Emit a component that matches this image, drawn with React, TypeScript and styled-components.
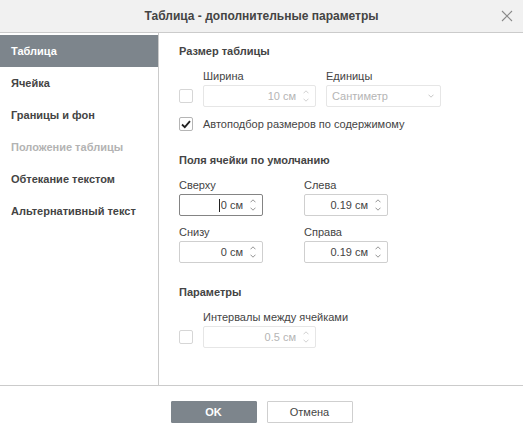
import React from 'react';
import styled, { createGlobalStyle } from 'styled-components';

const GlobalStyle = createGlobalStyle`
  html, body {
    margin: 0;
    padding: 0;
    background: #ffffff;
  }
  body {
    font-family: "Liberation Sans", Arial, sans-serif;
    font-size: 11px;
    color: #444444;
  }
`;

const navItems = [
  { label: 'Таблица', active: true },
  { label: 'Ячейка' },
  { label: 'Границы и фон' },
  { label: 'Положение таблицы', disabled: true },
  { label: 'Обтекание текстом' },
  { label: 'Альтернативный текст' },
];

const Chevron = ({ up }: { up?: boolean }) => (
  <svg width="6" height="4" viewBox="0 0 6 4">
    <path
      d={up ? 'M0.5 3.3 L3 0.8 L5.5 3.3' : 'M0.5 0.7 L3 3.2 L5.5 0.7'}
      fill="none"
      stroke="currentColor"
      strokeWidth="0.9"
    />
  </svg>
);

const Spinner = ({ disabled }: { disabled?: boolean }) => (
  <SpinBox $disabled={disabled}>
    <Chevron up />
    <Chevron />
  </SpinBox>
);

interface SpinInputProps {
  value: string;
  width: number;
  disabled?: boolean;
  focused?: boolean;
}

const SpinInput = ({ value, width, disabled, focused }: SpinInputProps) => (
  <InputBox $width={width} $disabled={disabled} $focused={focused}>
    {focused && <Caret />}
    {value}
    <Spinner disabled={disabled} />
  </InputBox>
);

const Checkbox = ({ checked, disabled }: { checked?: boolean; disabled?: boolean }) => (
  <CheckBox $disabled={disabled}>
    {checked && (
      <svg width="10" height="9" viewBox="0 0 10 9">
        <path d="M1 4.5 L3.8 7.2 L9 1.2" fill="none" stroke="#222" strokeWidth="1.8" />
      </svg>
    )}
  </CheckBox>
);

const App = () => (
  <>
    <GlobalStyle />
    <Dialog>
      <Header>
        <Title>Таблица - дополнительные параметры</Title>
        <CloseButton>
          <svg width="12" height="12" viewBox="0 0 12 12">
            <path d="M1 1 L11 11 M11 1 L1 11" stroke="#8a8a8a" strokeWidth="1.1" />
          </svg>
        </CloseButton>
      </Header>
      <Body>
        <Nav>
          {navItems.map((item) => (
            <NavItem key={item.label} $active={item.active} $disabled={item.disabled}>
              {item.label}
            </NavItem>
          ))}
        </Nav>
        <Content>
          <Section>
            <Heading>Размер таблицы</Heading>
            <CheckRow>
              <Checkbox disabled />
              <Field>
                <Label>Ширина</Label>
                <SpinInput value="10 см" width={113} disabled />
              </Field>
              <Field>
                <Label>Единицы</Label>
                <Select>
                  Сантиметр
                  <SelectArrow>
                    <Chevron />
                  </SelectArrow>
                </Select>
              </Field>
            </CheckRow>
            <InlineCheck>
              <Checkbox checked />
              <span>Автоподбор размеров по содержимому</span>
            </InlineCheck>
          </Section>

          <Section>
            <Heading>Поля ячейки по умолчанию</Heading>
            <MarginGrid>
              <Field>
                <Label>Сверху</Label>
                <SpinInput value="0 см" width={84} focused />
              </Field>
              <Field>
                <Label>Слева</Label>
                <SpinInput value="0.19 см" width={84} />
              </Field>
              <Field>
                <Label>Снизу</Label>
                <SpinInput value="0 см" width={84} />
              </Field>
              <Field>
                <Label>Справа</Label>
                <SpinInput value="0.19 см" width={84} />
              </Field>
            </MarginGrid>
          </Section>

          <Section>
            <Heading>Параметры</Heading>
            <CheckRow>
              <Checkbox disabled />
              <Field>
                <Label>Интервалы между ячейками</Label>
                <SpinInput value="0.5 см" width={113} disabled />
              </Field>
            </CheckRow>
          </Section>
        </Content>
      </Body>
      <Footer>
        <Button $primary>OK</Button>
        <Button>Отмена</Button>
      </Footer>
    </Dialog>
  </>
);

const Dialog = styled.div`
  width: 523px;
  height: 430px;
  display: flex;
  flex-direction: column;
  background: #ffffff;
  overflow: hidden;
`;

const Header = styled.div`
  position: relative;
  height: 32px;
  flex-shrink: 0;
  display: flex;
  align-items: center;
  justify-content: center;
  background: #f1f1f1;
  border-bottom: 1px solid #cbcbcb;
`;

const Title = styled.div`
  font-size: 12px;
  font-weight: bold;
  color: #444444;
`;

const CloseButton = styled.div`
  position: absolute;
  right: 10px;
  top: 10px;
  width: 12px;
  height: 12px;
  display: flex;
`;

const Body = styled.div`
  flex: 1;
  display: flex;
  min-height: 0;
`;

const Nav = styled.div`
  width: 158px;
  flex-shrink: 0;
  padding-top: 2px;
  border-right: 1px solid #cbcbcb;
  display: flex;
  flex-direction: column;
`;

const NavItem = styled.div<{ $active?: boolean; $disabled?: boolean }>`
  height: 32px;
  display: flex;
  align-items: center;
  padding-left: 11px;
  font-weight: bold;
  color: ${({ $active, $disabled }) => ($active ? '#ffffff' : $disabled ? '#b3b3b3' : '#444444')};
  background: ${({ $active }) => ($active ? '#7d858c' : 'transparent')};
`;

const Content = styled.div`
  flex: 1;
  padding: 12px 0 0 20px;
  display: flex;
  flex-direction: column;
  gap: 23px;
`;

const Section = styled.div`
  display: flex;
  flex-direction: column;
`;

const Heading = styled.div`
  font-weight: bold;
  line-height: 13px;
  margin-bottom: 12px;
`;

const CheckRow = styled.div`
  display: flex;
  align-items: flex-end;
  gap: 10px;
`;

const Field = styled.div`
  display: flex;
  flex-direction: column;
`;

const Label = styled.div`
  line-height: 13px;
  margin-bottom: 2px;
  color: #444444;
`;

const InputBox = styled.div<{ $width: number; $disabled?: boolean; $focused?: boolean }>`
  position: relative;
  width: ${({ $width }) => $width}px;
  height: 22px;
  box-sizing: border-box;
  display: flex;
  align-items: center;
  justify-content: flex-end;
  padding-right: 19px;
  border: 1px solid ${({ $disabled, $focused }) => ($focused ? '#848484' : $disabled ? '#e6e6e6' : '#cfcfcf')};
  border-radius: 2px;
  color: ${({ $disabled }) => ($disabled ? '#b5b5b5' : '#444444')};
`;

const Caret = styled.span`
  width: 1px;
  height: 13px;
  background: #222;
  margin-right: 1px;
`;

const SpinBox = styled.div<{ $disabled?: boolean }>`
  position: absolute;
  right: 6px;
  top: 4px;
  display: flex;
  flex-direction: column;
  gap: 4px;
  color: ${({ $disabled }) => ($disabled ? '#cccccc' : '#888888')};
`;

const Select = styled.div`
  position: relative;
  width: 115px;
  height: 22px;
  box-sizing: border-box;
  display: flex;
  align-items: center;
  padding-left: 5px;
  border: 1px solid #e6e6e6;
  border-radius: 2px;
  color: #b5b5b5;
`;

const SelectArrow = styled.div`
  position: absolute;
  right: 6px;
  top: 8px;
  display: flex;
  color: #c0c0c0;
`;

const CheckBox = styled.div<{ $disabled?: boolean }>`
  width: 14px;
  height: 14px;
  box-sizing: border-box;
  flex-shrink: 0;
  display: flex;
  align-items: center;
  justify-content: center;
  border: 1px solid ${({ $disabled }) => ($disabled ? '#d6d6d6' : '#b5b5b5')};
  border-radius: 2px;
  margin-bottom: 4px;
`;

const InlineCheck = styled.div`
  display: flex;
  align-items: center;
  gap: 10px;
  margin-top: 10px;

  ${CheckBox} {
    margin-bottom: 0;
  }
`;

const MarginGrid = styled.div`
  display: grid;
  grid-template-columns: 84px 84px;
  column-gap: 41px;
  row-gap: 10px;
`;

const Footer = styled.div`
  height: 45px;
  flex-shrink: 0;
  box-sizing: border-box;
  border-top: 1px solid #cbcbcb;
  display: flex;
  justify-content: center;
  align-items: flex-start;
  padding-top: 15px;
  gap: 10px;
`;

const Button = styled.div<{ $primary?: boolean }>`
  width: 86px;
  height: 22px;
  box-sizing: border-box;
  display: flex;
  align-items: center;
  justify-content: center;
  border-radius: 1px;
  font-weight: ${({ $primary }) => ($primary ? 'bold' : 'normal')};
  color: ${({ $primary }) => ($primary ? '#ffffff' : '#444444')};
  background: ${({ $primary }) => ($primary ? '#7d858c' : '#ffffff')};
  border: 1px solid ${({ $primary }) => ($primary ? '#7d858c' : '#cfcfcf')};
`;

export default App;
